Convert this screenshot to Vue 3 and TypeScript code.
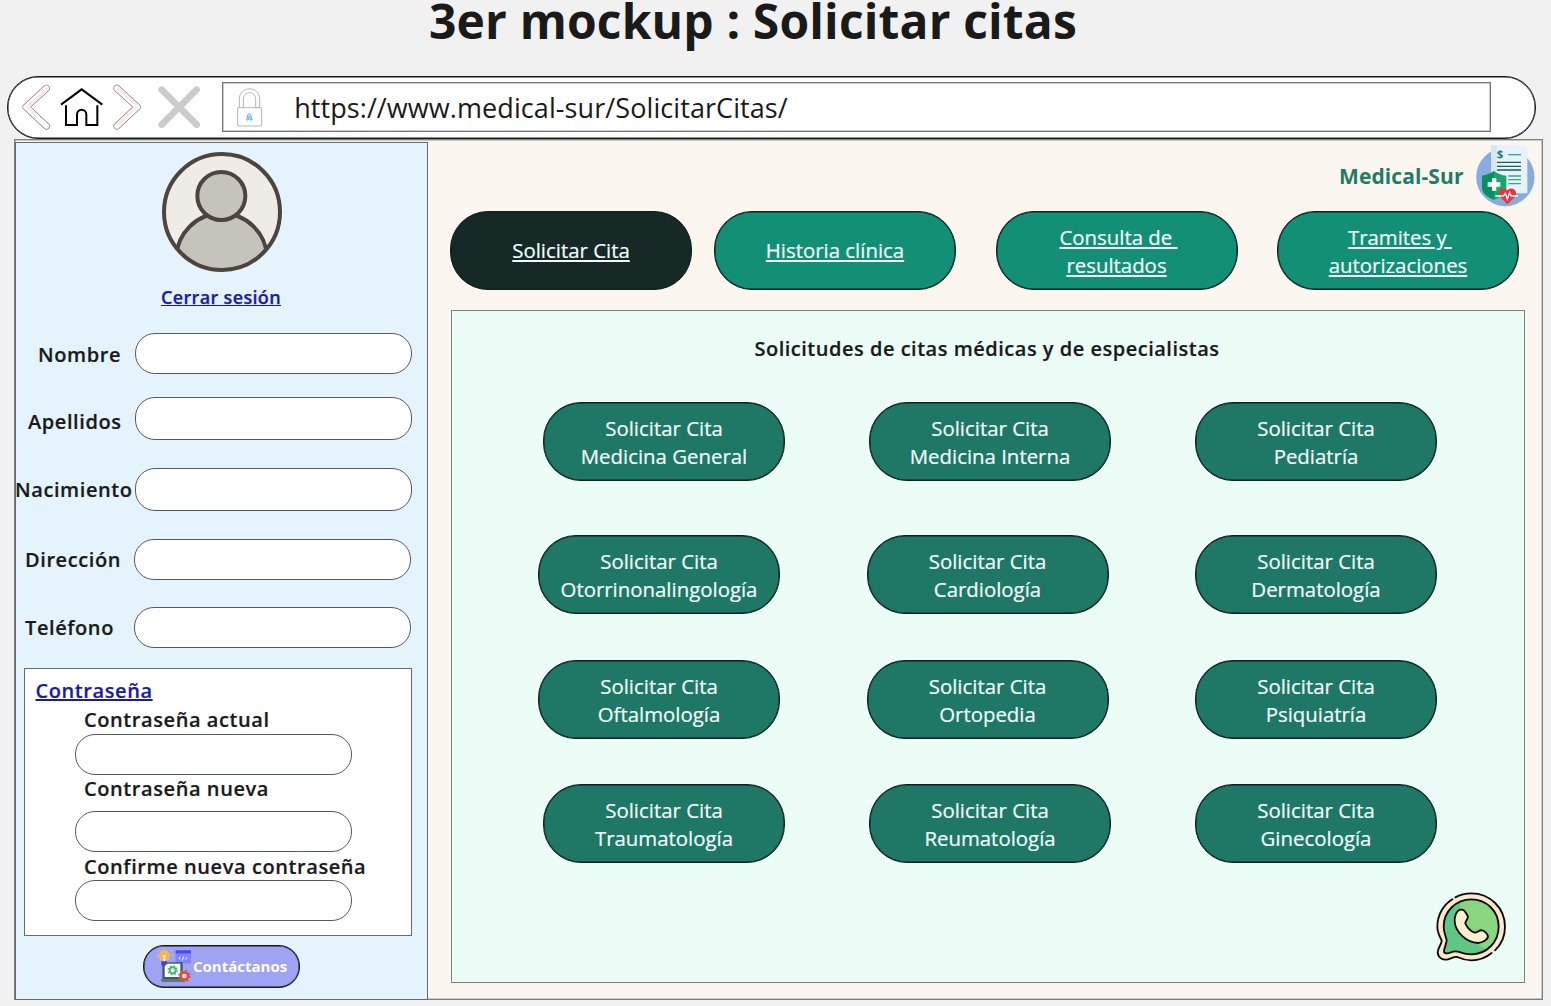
<script setup lang="ts">
interface Field {
  id: string
  label: string
}

interface ServiceRow {
  id: string
  wide: boolean
  items: string[]
}

const fields: Field[] = [
  { id: 'nombre', label: 'Nombre' },
  { id: 'apellidos', label: 'Apellidos' },
  { id: 'nacimiento', label: 'Nacimiento' },
  { id: 'direccion', label: 'Dirección' },
  { id: 'telefono', label: 'Teléfono' },
]

const passwords: Field[] = [
  { id: 'actual', label: 'Contraseña actual' },
  { id: 'nueva', label: 'Contraseña nueva' },
  { id: 'confirme', label: 'Confirme nueva contraseña' },
]

const tabs: string[][] = [
  ['Solicitar Cita'],
  ['Historia clínica'],
  ['Consulta de\u00a0', 'resultados'],
  ['Tramites y\u00a0', 'autorizaciones'],
]

const rows: ServiceRow[] = [
  { id: 'r1', wide: false, items: ['Medicina General', 'Medicina Interna', 'Pediatría'] },
  { id: 'r2', wide: true, items: ['Otorrinonalingología', 'Cardiología', 'Dermatología'] },
  { id: 'r3', wide: true, items: ['Oftalmología', 'Ortopedia', 'Psiquiatría'] },
  { id: 'r4', wide: false, items: ['Traumatología', 'Reumatología', 'Ginecología'] },
]
</script>

<template>
  <div class="page">
    <h1 class="title"><span>3er mockup : Solicitar citas</span></h1>

    <header class="bar">
      <svg class="ic-back" viewBox="60 55 95 145">
        <g fill="none" stroke-linecap="round" stroke-linejoin="round">
          <path d="M139 71L78 127L139 184" stroke="#777" stroke-width="21" />
          <path d="M139 71L78 127L139 184" stroke="#fff" stroke-width="17" />
          <path d="M140 74L83 126L106 149" stroke="#fdeae7" stroke-width="9" />
        </g>
      </svg>
      <svg class="ic-home" viewBox="180 55 130 145">
        <g fill="none" stroke="#000" stroke-width="6">
          <path d="M183 120L245 74L307 120" />
          <path d="M198 122V181H231V150C231 130 259 130 259 150V181H292V122" />
        </g>
      </svg>
      <svg class="ic-fwd" viewBox="335 55 90 145">
        <g fill="none" stroke-linecap="round" stroke-linejoin="round">
          <path d="M350 71L411 127L350 184" stroke="#777" stroke-width="21" />
          <path d="M350 71L411 127L350 184" stroke="#fff" stroke-width="17" />
          <path d="M353 70L409 122M406 130L356 176" stroke="#fdeae7" stroke-width="9" />
        </g>
      </svg>
      <svg class="ic-close" viewBox="470 55 134 145">
        <path d="M484 75L589 180M589 75L484 180" stroke="#cbcbcb" stroke-width="20" stroke-linecap="round" />
      </svg>
      <div class="url">
        <svg class="ic-lock" viewBox="708 55 82 145">
          <g fill="#fff" stroke="#b4b4b4" stroke-width="3">
            <path d="M718 129V104C718 62 779 62 779 104V129H767V106C767 76 730 76 730 106V129Z" />
            <rect x="713" y="129" width="72" height="55" rx="1" />
          </g>
          <path d="M740 166L744 149C746 146 750 146 752 149L756 166H751L749 154H747L745 166Z" fill="#dff0ff" stroke="#5cb2f5" stroke-width="3" />
        </svg>
        <span class="url-text">https://www.medical-sur/SolicitarCitas/</span>
      </div>
    </header>

    <div class="frame">
      <aside class="side">
        <svg class="avatar" viewBox="36 21 360 360">
          <defs>
            <clipPath id="face"><circle cx="216" cy="201" r="174" /></clipPath>
          </defs>
          <circle cx="216" cy="201" r="174" fill="#efece7" />
          <g stroke="#4c443f" stroke-width="12">
            <circle cx="215" cy="341" r="136" fill="#c6c3bc" clip-path="url(#face)" />
            <circle cx="214" cy="153" r="72" fill="#c6c3bc" />
            <circle cx="216" cy="201" r="174" fill="none" />
          </g>
        </svg>
        <a class="logout">Cerrar sesión</a>

        <div v-for="f in fields" :key="f.id" class="field" :class="f.id">
          <label class="lbl">{{ f.label }}</label>
          <div class="input"></div>
        </div>

        <section class="pass">
          <a class="pass-title">Contraseña</a>
          <div v-for="p in passwords" :key="p.id" class="pass-field" :class="p.id">
            <label class="lbl">{{ p.label }}</label>
            <div class="input"></div>
          </div>
        </section>

        <button class="contact">
          <svg class="ic-contact" viewBox="78 50 108 110">
            <g stroke="#f3cf9a" stroke-width="3" stroke-linecap="round">
              <path d="M84 62L85 63M82 76H83M123 60L122 61M126 76H125M103 54V55" />
            </g>
            <circle cx="103" cy="76" r="17" fill="#f8b54c" />
            <path d="M103 92V78M99 75L103 79L107 75" fill="none" stroke="#fff" stroke-width="4" />
            <rect x="137" y="60" width="46" height="39" fill="#7f83ff" />
            <rect x="137" y="60" width="46" height="9" fill="#4b4af0" />
            <path d="M151 80L147 84L151 88M167 80L171 84L167 88M161 79L157 90" fill="none" stroke="#fff" stroke-width="3" />
            <path d="M97 96H158V146H97Z" fill="#455a64" />
            <path d="M94 93H111V104L102 109L94 104Z" fill="#473fe8" />
            <path d="M104 108L112 100H151V140H104Z" fill="#fff" />
            <rect x="93" y="146" width="72" height="9" rx="3" fill="#5e7d82" />
            <circle cx="128" cy="120" r="9" fill="none" stroke="#3dbb78" stroke-width="6" />
            <circle cx="128" cy="120" r="13.5" fill="none" stroke="#3dbb78" stroke-width="4" stroke-dasharray="5.3 5.3" />
            <circle cx="163" cy="137" r="11" fill="#fff" stroke="#e34b3b" stroke-width="8" />
            <circle cx="163" cy="137" r="16.5" fill="none" stroke="#e34b3b" stroke-width="4" stroke-dasharray="6.5 6.5" />
            <circle cx="163" cy="137" r="4" fill="#f5d2cf" />
          </svg>
          <span class="contact-text">Contáctanos</span>
        </button>
      </aside>

      <main class="main">
        <div class="brand">
          <span class="brand-name">Medical-Sur</span>
          <svg class="logo" viewBox="30 12 180 192">
            <circle cx="118" cy="111" r="87.500" fill="#88acdf" />
            <path d="M75 16H174L184 25V160H75Z" fill="#e8f2fd" />
            <path d="M75 16H92V160H75Z" fill="#d4e6f8" />
            <text class="coin" x="92" y="53">$</text>
            <g stroke="#16855f" stroke-width="4">
              <path d="M127 44H165" stroke="#36a982" />
              <path d="M93 67H165M93 79H165M93 90H165" stroke="#155f4b" />
              <path d="M127 108H165M127 119H165M127 131H165" stroke="#36a982" />
            </g>
            <path d="M84 93C72 102 60 106 48 107V145C50 160 65 172 84 180C105 171 119 160 121 145V107C108 106 96 102 84 93Z" fill="#17a56b" />
            <path d="M84 93C72 102 60 106 48 107V145C50 160 65 172 84 180Z" fill="#0c8f5e" />
            <path d="M78 115H91V127H103V140H91V152H78V140H65V127H78Z" fill="#fff" />
            <path d="M124 193L103 172C90 155 108 136 124 151C140 136 159 155 146 172Z" fill="#f0343d" />
            <path d="M88 168H112L118 160L124 177L131 158L136 168H156" fill="none" stroke="#fff" stroke-width="4" />
          </svg>
        </div>

        <nav class="tabs">
          <a v-for="(t, i) in tabs" :key="i" class="pill tab" :class="{ active: i === 0, single: t.length === 1 }">
            <span v-for="line in t" :key="line">{{ line }}</span>
          </a>
        </nav>

        <section class="panel">
          <h2 class="panel-title">Solicitudes de citas médicas y de especialistas</h2>
          <div v-for="r in rows" :key="r.id" class="row" :class="[r.id, { wide: r.wide }]">
            <button v-for="s in r.items" :key="s" class="pill card">
              <span>Solicitar Cita</span>
              <span>{{ s }}</span>
            </button>
          </div>
          <svg class="whatsapp" viewBox="45 35 215 215">
            <path d="M154 42C98 42 52 86 52 142C52 157 58 170 63 183C63 194 53 205 53 220C55 237 69 243 84 240C95 237 104 231 112 233C125 239 139 243 154 243C210 243 255 198 255 142C255 86 210 42 154 42Z" fill="#fbe7cb" />
            <path d="M154 60C108 60 71 96 71 142C71 158 77 170 80 182C80 195 71 207 72 218C75 224 86 223 93 219C104 214 113 216 121 219C132 223 142 225 154 225C200 225 236 188 236 142C236 96 200 60 154 60Z" fill="#8ad580" />
            <path d="M120 67C91 80 71 108 71 142C71 158 77 170 80 182C80 195 71 207 72 218C75 224 86 223 93 219C104 214 113 216 121 219C146 229 178 225 198 211C160 190 120 140 120 67Z" fill="#60c684" />
            <g fill="none" stroke="#0b0b0b" stroke-width="5.5" stroke-linecap="round" stroke-linejoin="round">
              <path d="M154 60C108 60 71 96 71 142C71 158 77 170 80 182C80 195 71 207 72 218C75 224 86 223 93 219C104 214 113 216 121 219C132 223 142 225 154 225C200 225 236 188 236 142C236 96 200 60 154 60Z" />
              <path d="M106 54C120 46 136 42 154 42C210 42 255 86 255 142C255 170 244 195 225 213" />
              <path d="M215 221C198 235 177 243 154 243C139 243 125 239 112 233C104 231 95 237 84 240C69 243 55 237 53 220C53 205 66 194 65 183C58 170 52 157 52 142C52 107 70 77 97 60" />
              <path d="M115 94C122 88 132 91 136 98L143 109C147 118 135 126 136 132C142 146 151 155 164 160C172 161 177 151 186 153C193 154 202 163 204 171C204 181 188 190 174 191C139 190 105 157 104 125C104 113 107 101 115 94Z" fill="#fdeed2" />
            </g>
          </svg>
        </section>
      </main>
    </div>
  </div>
</template>

<style>
body {
  margin: 0;
  background: #f1f1f1;
}
</style>

<style scoped>
* {
  box-sizing: border-box;
}
.page {
  width: 1551px;
  height: 1006px;
  overflow: hidden;
  background: #f1f1f1;
  color: #1a1a1a;
  font-family: "Open Sans", "Noto Sans", sans-serif;
  font-size: 20px;
  line-height: 28px;
}
svg {
  display: block;
  flex: none;
}
.title {
  margin: 0 0 0 429px;
  height: 76px;
  font-size: 48px;
  font-weight: 700;
  letter-spacing: 0.15px;
  line-height: 42px;
  white-space: nowrap;
}
.bar {
  position: relative;
  z-index: 1;
  display: flex;
  align-items: center;
  width: 1529px;
  height: 63px;
  margin-left: 7px;
  padding-left: 12px;
  border: 1px solid #1a1a1a;
  border-radius: 31px;
  box-shadow: inset 0 0 0 0.5px #1a1a1a;
  background: #fff;
}
.ic-back {
  width: 31.67px;
  height: 48.33px;
}
.ic-home {
  width: 43.33px;
  height: 48.33px;
  margin-left: 8.33px;
}
.ic-fwd {
  width: 30px;
  height: 48.33px;
  margin-left: 8.33px;
}
.ic-close {
  width: 44.67px;
  height: 48.33px;
  margin-left: 15px;
}
.url {
  display: flex;
  align-items: center;
  width: 1269px;
  height: 50px;
  margin-left: 21px;
  margin-top: -1px;
  padding-left: 13px;
  border: 1px solid #777;
  box-shadow: inset 0 0 0 0.5px #999;
}
.ic-lock {
  width: 27.33px;
  height: 48.33px;
}
.url-text {
  margin: 2px 0 0 30.5px;
  font-size: 27px;
  font-weight: 400;
  letter-spacing: 0.08px;
  white-space: nowrap;
}
.frame {
  display: flex;
  width: 1529px;
  height: 861px;
  margin-left: 14px;
  border: 1px solid #808080;
  box-shadow: inset 0 0 0 0.5px #999;
  background: #fbf6ef;
}
.side {
  display: flex;
  flex-direction: column;
  flex: none;
  width: 413px;
  height: 858px;
  margin: 2px 1px 0 0;
  border: 1px solid #63696e;
  background: #e5f3fd;
}
.avatar {
  width: 120px;
  height: 120px;
  margin: 9px 0 0 145.5px;
}
.logout {
  margin: 11px 0 0 145px;
  font-size: 18px;
  font-weight: 600;
  letter-spacing: 0.34px;
  -webkit-text-stroke: 0.25px currentColor;
  color: #1a1aa6;
  text-decoration: underline;
  white-space: nowrap;
}
.lbl {
  font-weight: 600;
  letter-spacing: 0.58px;
  -webkit-text-stroke: 0.2px currentColor;
  white-space: nowrap;
}
.field {
  display: flex;
  flex: none;
  align-items: center;
}
.field .lbl {
  width: 118.5px;
}
.input {
  flex: none;
  width: 277px;
  height: 41px;
  border: 1px solid #555a5e;
  border-radius: 20px;
  background: #fff;
}
.nombre {
  margin-top: 22px;
}
.nombre .lbl {
  padding: 2px 0 0 22px;
}
.apellidos {
  margin-top: 23px;
}
.apellidos .input,
.nacimiento .input {
  height: 43px;
}
.apellidos .lbl {
  padding: 7px 0 0 12px;
}
.nacimiento {
  margin-top: 28px;
}
.nacimiento .lbl {
  text-indent: -1px;
}
.direccion {
  margin-top: 28px;
}
.direccion .lbl,
.telefono .lbl {
  width: 118px;
  padding-left: 9px;
}
.telefono {
  margin-top: 27px;
}
.pass {
  display: flex;
  flex: none;
  flex-direction: column;
  width: 388px;
  height: 268px;
  margin: 20px 0 0 8px;
  border: 1px solid #666c70;
  background: #fff;
}
.pass-title {
  margin: 8px 0 0 10.5px;
  font-weight: 600;
  letter-spacing: 0.58px;
  -webkit-text-stroke: 0.2px currentColor;
  color: #1a1aa6;
  text-decoration: underline;
}
.pass-field {
  display: flex;
  flex-direction: column;
  padding-left: 50px;
}
.pass-field .lbl {
  padding-left: 9px;
}
.pass-field.actual {
  margin-top: 1px;
}
.nueva .input {
  margin-top: 8px;
}
.pass-field.confirme {
  margin-top: 1px;
}
.confirme .input {
  margin-top: -0.6px;
}
.contact {
  display: flex;
  flex: none;
  align-items: center;
  width: 157px;
  height: 43px;
  margin: 9px 0 0 127px;
  padding: 0 0 0 13px;
  border: 1px solid #1a1a1a;
  border-radius: 21px;
  box-shadow: inset 0 0 0 0.5px #1a1a1a;
  background: #9ea3f3;
  color: #fff;
  font-family: inherit;
  font-size: 15px;
  font-weight: 700;
}
.ic-contact {
  width: 36px;
  height: 36.67px;
  margin-top: -3px;
  margin-left: -1px;
}
.contact-text {
  margin: -2px 0 0 1px;
}
.main {
  display: flex;
  flex-direction: column;
}
.brand {
  display: flex;
  height: 71px;
  padding-left: 910px;
}
.brand-name {
  width: 137px;
  margin-top: 22px;
  font-size: 21px;
  font-weight: 700;
  letter-spacing: 0.1px;
  color: #237a66;
}
.logo {
  width: 60px;
  height: 64px;
  margin-top: 4px;
}
.coin {
  font-size: 34px;
  font-weight: 700;
  fill: #16855f;
}
.tabs {
  display: flex;
  margin-left: 21px;
}
.pill {
  display: flex;
  flex: none;
  flex-direction: column;
  align-items: center;
  justify-content: center;
  width: 242px;
  height: 79px;
  padding: 1px 0 0;
  border: 1px solid #12201d;
  border-radius: 38px;
  box-shadow: inset 0 0 0 0.5px #12201d;
  color: #f2fffc;
  font-family: inherit;
  font-size: 20.4px;
  font-weight: 400;
  -webkit-text-stroke: 0.2px currentColor;
  line-height: 28px;
  white-space: nowrap;
}
.tab {
  margin-right: 39.5px;
  background: #138f76;
  text-decoration: underline;
}
.tab.single {
  padding: 0 0 1px;
}
.tab span:first-child:not(:last-child) {
  margin-left: 4px;
}
.tab.active {
  margin-right: 22px;
  background: #172926;
}
.panel {
  display: flex;
  flex-direction: column;
  width: 1074px;
  height: 673px;
  margin: 20px 0 0 22px;
  border: 1px solid #7b8280;
  background: #ecfdf8;
}
.panel-title {
  width: 1070px;
  margin: 24px 0 0;
  font-size: 20px;
  font-weight: 600;
  letter-spacing: 0.51px;
  -webkit-text-stroke: 0.2px currentColor;
  line-height: 28px;
  text-align: center;
}
.row {
  display: flex;
  gap: 84px;
  padding-left: 91px;
}
.row.wide {
  gap: 86.5px;
  padding-left: 86px;
}
.card {
  background: #1f7766;
}
.r1 {
  margin-top: 39px;
}
.r2 {
  margin-top: 54px;
}
.r3,
.r4 {
  margin-top: 45.5px;
}
.whatsapp {
  width: 71.67px;
  height: 71.67px;
  margin: 28.3px 0 0 983px;
}
</style>
